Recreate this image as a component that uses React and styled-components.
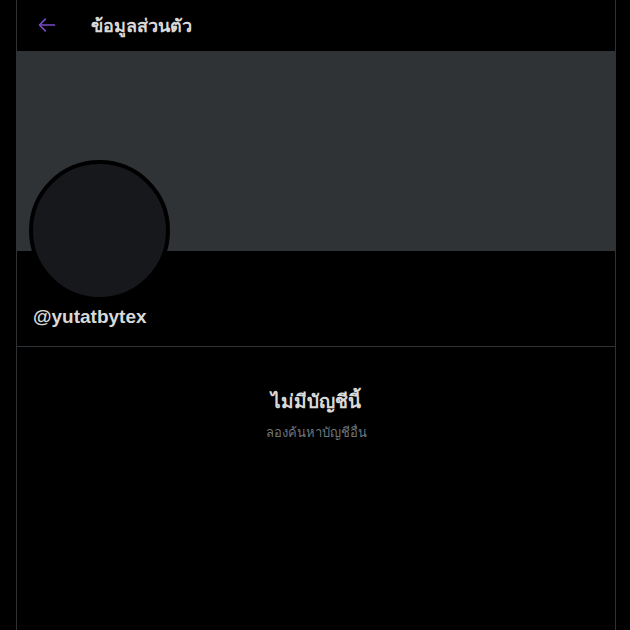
import React from 'react';
import styled, { createGlobalStyle } from 'styled-components';

const GlobalStyle = createGlobalStyle`
    html, body {
        margin: 0;
        padding: 0;
        background: #000;
        height: 100%;
    }
    body {
        font-family: "Liberation Sans", "Noto Sans", sans-serif;
        color: #d9d9d9;
    }
`;

function App() {
    return (
        <Page>
            <GlobalStyle />
            <Column>
                <Header>
                    <BackButton aria-label="back">
                        <svg width="20" height="20" viewBox="0 0 24 24" fill="none" stroke="#794bc4" strokeWidth="2" strokeLinecap="round" strokeLinejoin="round">
                            <path d="M21 12H4" />
                            <path d="M10 5l-7 7 7 7" />
                        </svg>
                    </BackButton>
                    <Title>ข้อมูลส่วนตัว</Title>
                </Header>
                <Banner />
                <ProfileInfo>
                    <Avatar />
                    <Handle>@yutatbytex</Handle>
                </ProfileInfo>
                <EmptyState>
                    <EmptyTitle>ไม่มีบัญชีนี้</EmptyTitle>
                    <EmptyText>ลองค้นหาบัญชีอื่น</EmptyText>
                </EmptyState>
            </Column>
        </Page>
    );
}

const Page = styled.div`
    min-height: 630px;
    padding-left: 16px;
    display: flex;
    background: #000;
`;

const Column = styled.div`
    width: 600px;
    min-height: 630px;
    box-sizing: border-box;
    border-left: 1px solid #2f3336;
    border-right: 1px solid #2f3336;
    display: flex;
    flex-direction: column;
`;

const Header = styled.div`
    height: 51px;
    display: flex;
    align-items: center;
    padding-left: 20px;
    box-sizing: border-box;
`;

const BackButton = styled.div`
    width: 20px;
    height: 20px;
    display: flex;
    align-items: center;
    justify-content: center;
    margin-right: 34px;
    margin-top: -2px;
`;

const Title = styled.h2`
    margin: 0;
    font-size: 18px;
    font-weight: 700;
    color: #d9d9d9;
`;

const Banner = styled.div`
    height: 200px;
    background: #2f3336;
`;

const ProfileInfo = styled.div`
    padding: 0 12px;
    height: 95px;
    border-bottom: 1px solid #2f3336;
`;

const Avatar = styled.div`
    width: 141px;
    height: 141px;
    box-sizing: border-box;
    border-radius: 50%;
    border: 4px solid #000;
    background: #16181c;
    margin-top: -91px;
`;

const Handle = styled.div`
    font-size: 19px;
    font-weight: 700;
    color: #d9d9d9;
    padding-left: 4px;
    margin-top: 5px;
`;

const EmptyState = styled.div`
    display: flex;
    flex-direction: column;
    align-items: center;
    padding-top: 39px;
`;

const EmptyTitle = styled.div`
    font-size: 19px;
    font-weight: 700;
    color: #d9d9d9;
`;

const EmptyText = styled.div`
    font-size: 13px;
    color: #6e767d;
    margin-top: 6px;
`;

export default App;
